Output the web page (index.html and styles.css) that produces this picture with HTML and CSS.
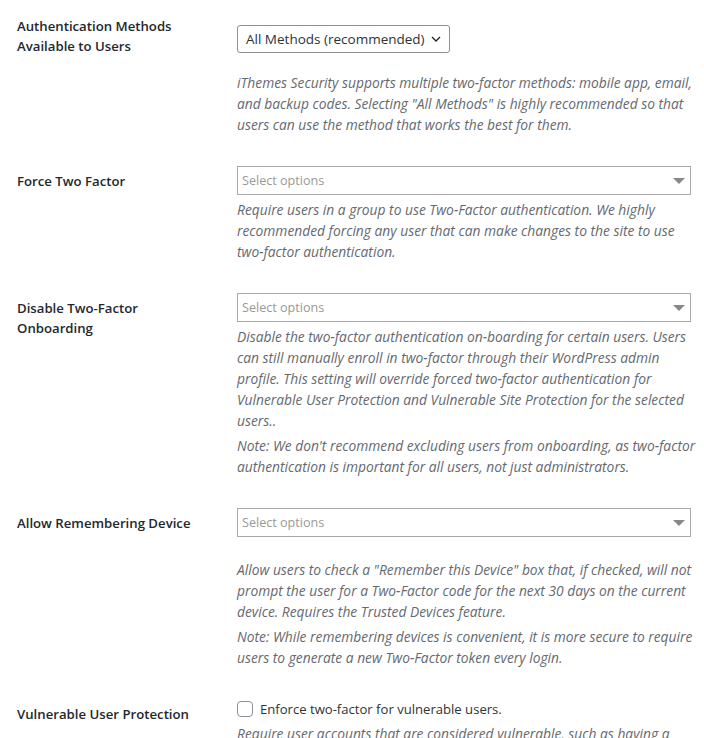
FILE: index.html
```html
<!DOCTYPE html>
<html lang="en">
<head>
    <meta charset="UTF-8">
    <meta name="viewport" content="width=device-width, initial-scale=1.0">
    <title>Two-Factor Settings</title>
    <link rel="stylesheet" href="styles.css">
</head>
<body>
    <div class="settings">

        <!-- Authentication methods -->
        <div class="row row-first">
            <div class="label">Authentication Methods Available to Users</div>
            <div class="field">
                <div class="select-small">
                    <span>All Methods (recommended)</span>
                    <svg class="chevron" viewBox="0 0 10 6" width="10" height="6">
                        <path d="M1 1 L5 5 L9 1" stroke="#1d2327" stroke-width="1.3" fill="none"/>
                    </svg>
                </div>
                <p class="hint spaced">iThemes Security supports multiple two-factor methods: mobile app, email,<br>
                    and backup codes. Selecting "All Methods" is highly recommended so that<br>
                    users can use the method that works the best for them.</p>
            </div>
        </div>

        <!-- Force two factor -->
        <div class="row">
            <div class="label">Force Two Factor</div>
            <div class="field">
                <div class="multi-select">
                    <span>Select options</span>
                    <span class="arrow"></span>
                </div>
                <p class="hint">Require users in a group to use Two-Factor authentication. We highly<br>
                    recommended forcing any user that can make changes to the site to use<br>
                    two-factor authentication.</p>
            </div>
        </div>

        <!-- Onboarding -->
        <div class="row">
            <div class="label">Disable Two-Factor Onboarding</div>
            <div class="field">
                <div class="multi-select">
                    <span>Select options</span>
                    <span class="arrow"></span>
                </div>
                <p class="hint">Disable the two-factor authentication on-boarding for certain users. Users<br>
                    can still manually enroll in two-factor through their WordPress admin<br>
                    profile. This setting will override forced two-factor authentication for<br>
                    Vulnerable User Protection and Vulnerable Site Protection for the selected<br>
                    users..</p>
                <p class="hint note">Note: We don't recommend excluding users from onboarding, as two-factor<br>
                    authentication is important for all users, not just administrators.</p>
            </div>
        </div>

        <!-- Remember device -->
        <div class="row">
            <div class="label">Allow Remembering Device</div>
            <div class="field">
                <div class="multi-select">
                    <span>Select options</span>
                    <span class="arrow"></span>
                </div>
                <p class="hint spaced-lg">Allow users to check a "Remember this Device" box that, if checked, will not<br>
                    prompt the user for a Two-Factor code for the next 30 days on the current<br>
                    device. Requires the Trusted Devices feature.</p>
                <p class="hint note">Note: While remembering devices is convenient, it is more secure to require<br>
                    users to generate a new Two-Factor token every login.</p>
            </div>
        </div>

        <!-- Vulnerable users -->
        <div class="row">
            <div class="label">Vulnerable User Protection</div>
            <div class="field">
                <label class="check">
                    <span class="box"></span>
                    Enforce two-factor for vulnerable users.
                </label>
                <p class="hint">Require user accounts that are considered vulnerable, such as having a<br>
                    weak password or recent brute force attacks, to use two-factor.</p>
            </div>
        </div>

    </div>
</body>
</html>
```

FILE: styles.css
```css
body {
    margin: 0;
    background: #fff;
    color: #1d2327;
    font-family: "Open Sans", "Noto Sans", sans-serif;
    font-size: 14px;
    overflow: hidden;
}
.settings {
    padding-top: 0.5px;
}
.row {
    display: grid;
    grid-template-columns: 220px 454px;
    padding: 15.5px 0 15.5px 17px;
}
.label {
    font-weight: 600;
    font-size: 13.2px;
    line-height: 20px;
    padding-top: 5px;
    padding-right: 30px;
    color: #23282d;
}
.row-first .label {
    padding-top: 0;
}
.field {
    min-width: 0;
}
.select-small {
    display: inline-flex;
    align-items: center;
    gap: 6px;
    margin-top: 9px;
    height: 28px;
    box-sizing: border-box;
    padding: 0 8px 0 8px;
    border: 1px solid #8c8f94;
    border-radius: 3px;
    font-size: 13.5px;
    color: #2c3338;
}
.chevron {
    display: block;
}
.multi-select {
    display: flex;
    align-items: center;
    justify-content: space-between;
    height: 29px;
    box-sizing: border-box;
    padding: 0 5px 0 4px;
    border: 1px solid #aaa;
    font-size: 12.6px;
    color: #999;
}
.arrow {
    width: 0;
    height: 0;
    border-left: 6px solid transparent;
    border-right: 6px solid transparent;
    border-top: 6px solid #888;
}
.hint {
    margin: 4px -12px 0 0;
    white-space: nowrap;
    font-style: italic;
    font-size: 13.8px;
    line-height: 21px;
    color: #646970;
}
.hint.spaced {
    margin-top: 19px;
}
.hint.spaced-lg {
    margin-top: 22px;
}
.hint.note {
    margin-top: 4px;
}
.check {
    display: flex;
    align-items: center;
    gap: 7px;
    line-height: 20px;
    font-size: 13.1px;
    color: #2c3338;
}
.box {
    width: 16px;
    height: 16px;
    box-sizing: border-box;
    border: 1px solid #8c8f94;
    border-radius: 4px;
}
```
